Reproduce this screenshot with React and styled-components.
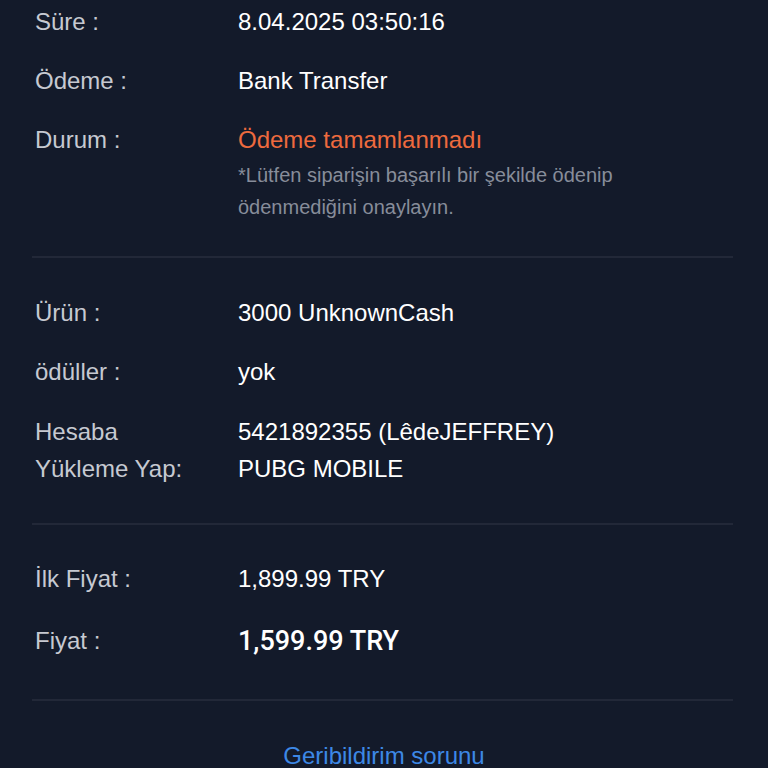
import React from "react";
import styled, { createGlobalStyle } from "styled-components";

const Global = createGlobalStyle`
  html, body {
    margin: 0;
    padding: 0;
    background: #131a2a;
  }
  body {
    font-family: "Liberation Sans", Arial, sans-serif;
    -webkit-font-smoothing: antialiased;
  }
`;

const Page = styled.div`
  width: 768px;
  height: 768px;
  overflow: hidden;
  background: #131a2a;
  box-sizing: border-box;
  padding: 0 35px;
`;

const Section = styled.section`
  display: flex;
  flex-direction: column;
  gap: ${(p) => p.$gap || 31}px;
  padding: ${(p) => p.$top}px 0 ${(p) => p.$bottom}px 3px;
  margin-left: -3px;
  border-bottom: 2px solid #222838;
`;

const Row = styled.div`
  display: grid;
  grid-template-columns: 203px 1fr;
  align-items: ${(p) => (p.$center ? "center" : "start")};
  margin-top: ${(p) => p.$shift || 0}px;
`;

const Label = styled.div`
  font-size: 24px;
  line-height: ${(p) => p.$lh || 28}px;
  color: #c6c9d1;
`;

const Value = styled.div`
  font-size: 24px;
  line-height: ${(p) => p.$lh || 28}px;
  color: ${(p) => p.$color || "#ffffff"};
`;

const BigValue = styled.div`
  font-family: Roboto, "Liberation Sans", sans-serif;
  font-weight: 500;
  font-size: 27px;
  line-height: 28px;
  color: #ffffff;
`;

const Note = styled.div`
  margin-top: 5px;
  font-size: 20px;
  line-height: 32px;
  color: #878d9a;
`;

const Footer = styled.div`
  display: flex;
  justify-content: center;
  padding-top: 41px;
`;

const Link = styled.a`
  font-size: 24px;
  line-height: 28px;
  color: #3d88e6;
  text-decoration: none;
`;

export default function App() {
  return (
    <>
      <Global />
      <Page>
        <Section $top={8} $bottom={33}>
          <Row>
            <Label>Süre :</Label>
            <Value>8.04.2025 03:50:16</Value>
          </Row>
          <Row>
            <Label>Ödeme :</Label>
            <Value>Bank Transfer</Value>
          </Row>
          <Row>
            <Label>Durum :</Label>
            <div>
              <Value $color="#ee6a3e">Ödeme tamamlanmadı</Value>
              <Note>
                *Lütfen siparişin başarılı bir şekilde ödenip
                <br />
                ödenmediğini onaylayın.
              </Note>
            </div>
          </Row>
        </Section>
        <Section $top={41} $bottom={36}>
          <Row>
            <Label>Ürün :</Label>
            <Value>3000 UnknownCash</Value>
          </Row>
          <Row>
            <Label>ödüller :</Label>
            <Value>yok</Value>
          </Row>
          <Row $shift={-4}>
            <Label $lh={37}>
              Hesaba
              <br />
              Yükleme Yap:
            </Label>
            <Value $lh={37}>
              5421892355 (LêdeJEFFREY)
              <br />
              PUBG MOBILE
            </Value>
          </Row>
        </Section>
        <Section $top={40} $bottom={44} $gap={34}>
          <Row>
            <Label>İlk Fiyat :</Label>
            <Value>1,899.99 TRY</Value>
          </Row>
          <Row $center>
            <Label>Fiyat :</Label>
            <BigValue>1,599.99 TRY</BigValue>
          </Row>
        </Section>
        <Footer>
          <Link href="#">Geribildirim sorunu</Link>
        </Footer>
      </Page>
    </>
  );
}
